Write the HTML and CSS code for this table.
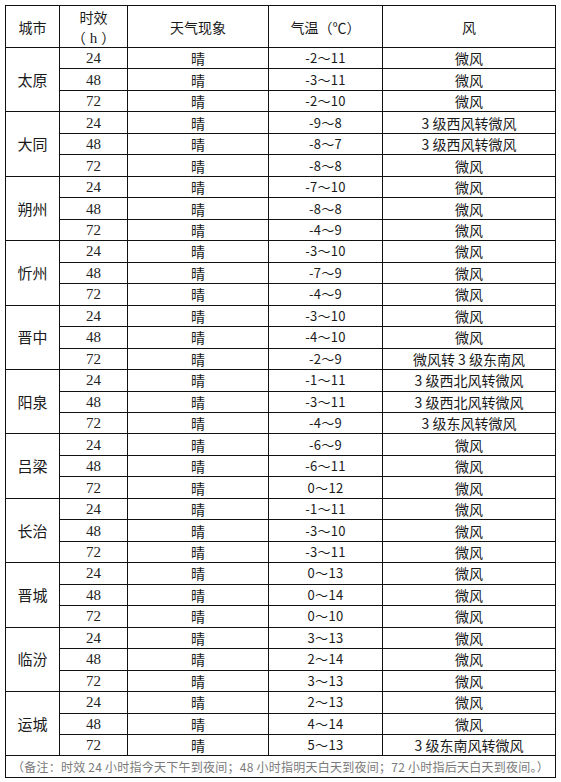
FILE: index.html
```html
<!DOCTYPE html>
<html lang="zh">
<head>
<meta charset="utf-8">
<link rel="stylesheet" href="styles.css">
</head>
<body>
<table class="tb">
<colgroup>
<col class="c1"><col class="c2"><col class="c3"><col class="c4"><col class="c5">
</colgroup>
<thead>
<tr class="hd">
<th>城市</th>
<th class="hr"><div class="ln">时效</div><div class="ln">（<span class="h">h</span>）</div></th>
<th>天气现象</th>
<th>气温（℃）</th>
<th>风</th>
</tr>
</thead>
<tbody>
<tr><td rowspan="3" class="city">太原</td><td class="n">24</td><td>晴</td><td class="t">-2～11</td><td>微风</td></tr>
<tr><td class="n">48</td><td>晴</td><td class="t">-3～11</td><td>微风</td></tr>
<tr><td class="n">72</td><td>晴</td><td class="t">-2～10</td><td>微风</td></tr>

<tr><td rowspan="3" class="city">大同</td><td class="n">24</td><td>晴</td><td class="t">-9～8</td><td>3 级西风转微风</td></tr>
<tr><td class="n">48</td><td>晴</td><td class="t">-8～7</td><td>3 级西风转微风</td></tr>
<tr><td class="n">72</td><td>晴</td><td class="t">-8～8</td><td>微风</td></tr>

<tr><td rowspan="3" class="city">朔州</td><td class="n">24</td><td>晴</td><td class="t">-7～10</td><td>微风</td></tr>
<tr><td class="n">48</td><td>晴</td><td class="t">-8～8</td><td>微风</td></tr>
<tr><td class="n">72</td><td>晴</td><td class="t">-4～9</td><td>微风</td></tr>

<tr><td rowspan="3" class="city">忻州</td><td class="n">24</td><td>晴</td><td class="t">-3～10</td><td>微风</td></tr>
<tr><td class="n">48</td><td>晴</td><td class="t">-7～9</td><td>微风</td></tr>
<tr><td class="n">72</td><td>晴</td><td class="t">-4～9</td><td>微风</td></tr>

<tr><td rowspan="3" class="city">晋中</td><td class="n">24</td><td>晴</td><td class="t">-3～10</td><td>微风</td></tr>
<tr><td class="n">48</td><td>晴</td><td class="t">-4～10</td><td>微风</td></tr>
<tr><td class="n">72</td><td>晴</td><td class="t">-2～9</td><td>微风转 3 级东南风</td></tr>

<tr><td rowspan="3" class="city">阳泉</td><td class="n">24</td><td>晴</td><td class="t">-1～11</td><td>3 级西北风转微风</td></tr>
<tr><td class="n">48</td><td>晴</td><td class="t">-3～11</td><td>3 级西北风转微风</td></tr>
<tr><td class="n">72</td><td>晴</td><td class="t">-4～9</td><td>3 级东风转微风</td></tr>

<tr><td rowspan="3" class="city">吕梁</td><td class="n">24</td><td>晴</td><td class="t">-6～9</td><td>微风</td></tr>
<tr><td class="n">48</td><td>晴</td><td class="t">-6～11</td><td>微风</td></tr>
<tr><td class="n">72</td><td>晴</td><td class="t">0～12</td><td>微风</td></tr>

<tr><td rowspan="3" class="city">长治</td><td class="n">24</td><td>晴</td><td class="t">-1～11</td><td>微风</td></tr>
<tr><td class="n">48</td><td>晴</td><td class="t">-3～10</td><td>微风</td></tr>
<tr><td class="n">72</td><td>晴</td><td class="t">-3～11</td><td>微风</td></tr>

<tr><td rowspan="3" class="city">晋城</td><td class="n">24</td><td>晴</td><td class="t">0～13</td><td>微风</td></tr>
<tr><td class="n">48</td><td>晴</td><td class="t">0～14</td><td>微风</td></tr>
<tr><td class="n">72</td><td>晴</td><td class="t">0～10</td><td>微风</td></tr>

<tr><td rowspan="3" class="city">临汾</td><td class="n">24</td><td>晴</td><td class="t">3～13</td><td>微风</td></tr>
<tr><td class="n">48</td><td>晴</td><td class="t">2～14</td><td>微风</td></tr>
<tr><td class="n">72</td><td>晴</td><td class="t">3～13</td><td>微风</td></tr>

<tr><td rowspan="3" class="city">运城</td><td class="n">24</td><td>晴</td><td class="t">2～13</td><td>微风</td></tr>
<tr><td class="n">48</td><td>晴</td><td class="t">4～14</td><td>微风</td></tr>
<tr><td class="n">72</td><td>晴</td><td class="t">5～13</td><td>3 级东南风转微风</td></tr>

<tr class="ft"><td colspan="5">（备注：时效 24 小时指今天下午到夜间；48 小时指明天白天到夜间；72 小时指后天白天到夜间。）</td></tr>
</tbody>
</table>
</body>
</html>
```

FILE: styles.css
```css
html, body {
  margin: 0;
  padding: 0;
  background: #ffffff;
}
body {
  padding: 5px 0 0 5px;
  font-family: "Noto Sans CJK SC", "Noto Sans", sans-serif;
  color: #1a1a1a;
}
.tb {
  border-collapse: collapse;
  table-layout: fixed;
  width: 550px;
  font-size: 14px;
}
.c1 { width: 54px; }
.c2 { width: 68px; }
.c3 { width: 141px; }
.c4 { width: 114px; }
.c5 { width: 173px; }
.tb th, .tb td {
  border: 1px solid #111;
  padding: 0;
  text-align: center;
  vertical-align: middle;
  line-height: 16px;
  font-weight: normal;
}
.hd th {
  height: 41px;
}
.ln {
  line-height: 20px;
  height: 20px;
  white-space: nowrap;
}
.h {
  font-family: "Liberation Serif", serif;
  font-size: 15px;
  margin: 0 4px;
}
.tb tbody td {
  height: 20.47px;
}
.n {
  font-family: "Liberation Serif", serif;
  font-size: 15px;
  color: #222;
}
.t {
  font-size: 13px;
  letter-spacing: 0.3px;
}
.city {
  font-size: 15px;
}
.ft td {
  height: 20px;
  color: #7a7a7a;
  font-size: 12px;
  letter-spacing: 0.25px;
  white-space: nowrap;
}
```
